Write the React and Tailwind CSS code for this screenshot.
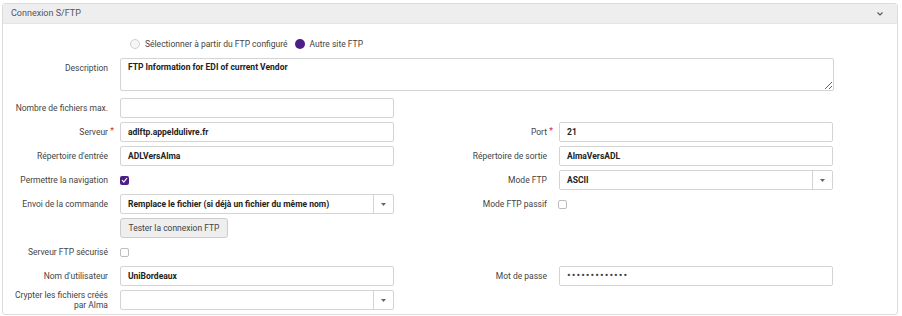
import React from "react";

function Label({ children, required, top }) {
  return (
    <div
      className={
        "w-[105px] shrink-0 flex justify-end text-right leading-[10px] " +
        (top ? "items-start pt-[5px]" : "items-center")
      }
    >
      <span className="relative">
        {children}
        {required && (
          <span className="absolute right-[-6px] top-[-1px] text-[#d0312d]">*</span>
        )}
      </span>
    </div>
  );
}

function RLabel({ children, required }) {
  return (
    <div className="w-[153px] shrink-0 flex justify-end items-center text-right leading-[10px]">
      <span className="relative">
        {children}
        {required && (
          <span className="absolute right-[-6px] top-[-1px] text-[#d0312d]">*</span>
        )}
      </span>
    </div>
  );
}

function Input({ value, dots }) {
  return (
    <div className="w-[274px] h-[20px] shrink-0 border border-[#d4d4d4] rounded-[2px] bg-white flex items-center px-[7px] font-bold text-[#222] whitespace-nowrap">
      {dots ? (
        <span className="font-normal text-[#444] tracking-[1px] text-[11px] leading-[10px]">•••••••••••••</span>
      ) : (
        value
      )}
    </div>
  );
}

function Select({ value }) {
  return (
    <div className="w-[274px] h-[20px] shrink-0 border border-[#d4d4d4] rounded-[2px] bg-white flex items-stretch">
      <div className="flex-1 flex items-center px-[7px] font-bold text-[#222] whitespace-nowrap">{value}</div>
      <div className="w-[20px] border-l border-[#d4d4d4] flex items-center justify-center">
        <svg width="5" height="3" viewBox="0 0 5 3">
          <path d="M0 0 L5 0 L2.5 3 Z" fill="#666" />
        </svg>
      </div>
    </div>
  );
}

function Checkbox({ checked }) {
  return checked ? (
    <div className="w-[9px] h-[9px] rounded-[2px] bg-[#4b1f87] flex items-center justify-center">
      <svg width="7" height="6" viewBox="0 0 7 6">
        <path d="M1 3.2 L2.8 5 L6 1" stroke="white" strokeWidth="1.2" fill="none" />
      </svg>
    </div>
  ) : (
    <div className="w-[9px] h-[9px] rounded-[2px] border border-[#bdbdbd] bg-white" />
  );
}

export default function App() {
  return (
    <div className="w-[902px] h-[316px] bg-white pt-[3px] pl-[2px] font-['Roboto',sans-serif] text-[8.5px] text-[#444]">
      <div className="w-[896px] border border-[#dcdcdc] rounded-[3px]">
        <div className="h-[20px] bg-[#eeeeee] border-b border-[#e4e4e4] flex items-center justify-between pl-[8px] pr-[14px] text-[#555] text-[9px]">
          <span>Connexion S/FTP</span>
          <svg width="6" height="4" viewBox="0 0 6 4">
            <path d="M0.5 0.5 L3 3 L5.5 0.5" stroke="#555" strokeWidth="1.1" fill="none" />
          </svg>
        </div>
        <div className="pt-[10px] pb-[4px] flex flex-col">
          {/* radio row */}
          <div className="h-[20px] flex items-center pl-[127px]">
            <div className="w-[10px] h-[10px] rounded-full border border-[#cfcfcf] bg-[#f6f6f6]" />
            <span className="ml-[5px]">Sélectionner à partir du FTP configuré</span>
            <div className="ml-[7px] w-[10px] h-[10px] rounded-full bg-[#4b1f87]" />
            <span className="ml-[5px]">Autre site FTP</span>
          </div>
          {/* description */}
          <div className="mt-[4px] flex gap-[12px]">
            <Label top>Description</Label>
            <textarea
              readOnly
              defaultValue="FTP Information for EDI of current Vendor"
              className="w-[714px] h-[33px] border border-[#d4d4d4] rounded-[2px] px-[7px] pt-[3px] font-bold text-[#222] text-[8.5px] leading-[11px] outline-none resize"
            />
          </div>
          <div className="mt-[7px] flex flex-col gap-[4px]">
            <div className="h-[20px] flex gap-[12px]">
              <Label>Nombre de fichiers max.</Label>
              <Input value="" />
            </div>
            <div className="h-[20px] flex">
              <Label required>Serveur</Label>
              <div className="ml-[12px]"><Input value="adlftp.appeldulivre.fr" /></div>
              <RLabel required>Port</RLabel>
              <div className="ml-[12px]"><Input value="21" /></div>
            </div>
            <div className="h-[20px] flex">
              <Label>Répertoire d'entrée</Label>
              <div className="ml-[12px]"><Input value="ADLVersAlma" /></div>
              <RLabel>Répertoire de sortie</RLabel>
              <div className="ml-[12px]"><Input value="AlmaVersADL" /></div>
            </div>
            <div className="h-[20px] flex">
              <Label>Permettre la navigation</Label>
              <div className="ml-[12px] w-[274px] flex items-center"><Checkbox checked /></div>
              <RLabel>Mode FTP</RLabel>
              <div className="ml-[12px]"><Select value="ASCII" /></div>
            </div>
            <div className="h-[20px] flex">
              <Label>Envoi de la commande</Label>
              <div className="ml-[12px]"><Select value="Remplace le fichier (si déjà un fichier du même nom)" /></div>
              <RLabel>Mode FTP passif</RLabel>
              <div className="ml-[11px] flex items-center"><Checkbox /></div>
            </div>
            <div className="h-[20px] flex">
              <div className="w-[105px]" />
              <div className="ml-[12px] w-[108px] h-[20px] border border-[#cccccc] rounded-[3px] bg-[#eeeeee] flex items-center justify-center text-[#444] whitespace-nowrap">
                Tester la connexion FTP
              </div>
            </div>
            <div className="h-[20px] flex">
              <Label>Serveur FTP sécurisé</Label>
              <div className="ml-[12px] flex items-center"><Checkbox /></div>
            </div>
            <div className="h-[20px] flex">
              <Label>Nom d'utilisateur</Label>
              <div className="ml-[12px]"><Input value="UniBordeaux" /></div>
              <RLabel>Mot de passe</RLabel>
              <div className="ml-[12px]"><Input dots /></div>
            </div>
            <div className="h-[20px] flex">
              <Label>
                Crypter les fichiers créés
                <br />
                par Alma
              </Label>
              <div className="ml-[12px]"><Select value="" /></div>
            </div>
          </div>
        </div>
      </div>
    </div>
  );
}
